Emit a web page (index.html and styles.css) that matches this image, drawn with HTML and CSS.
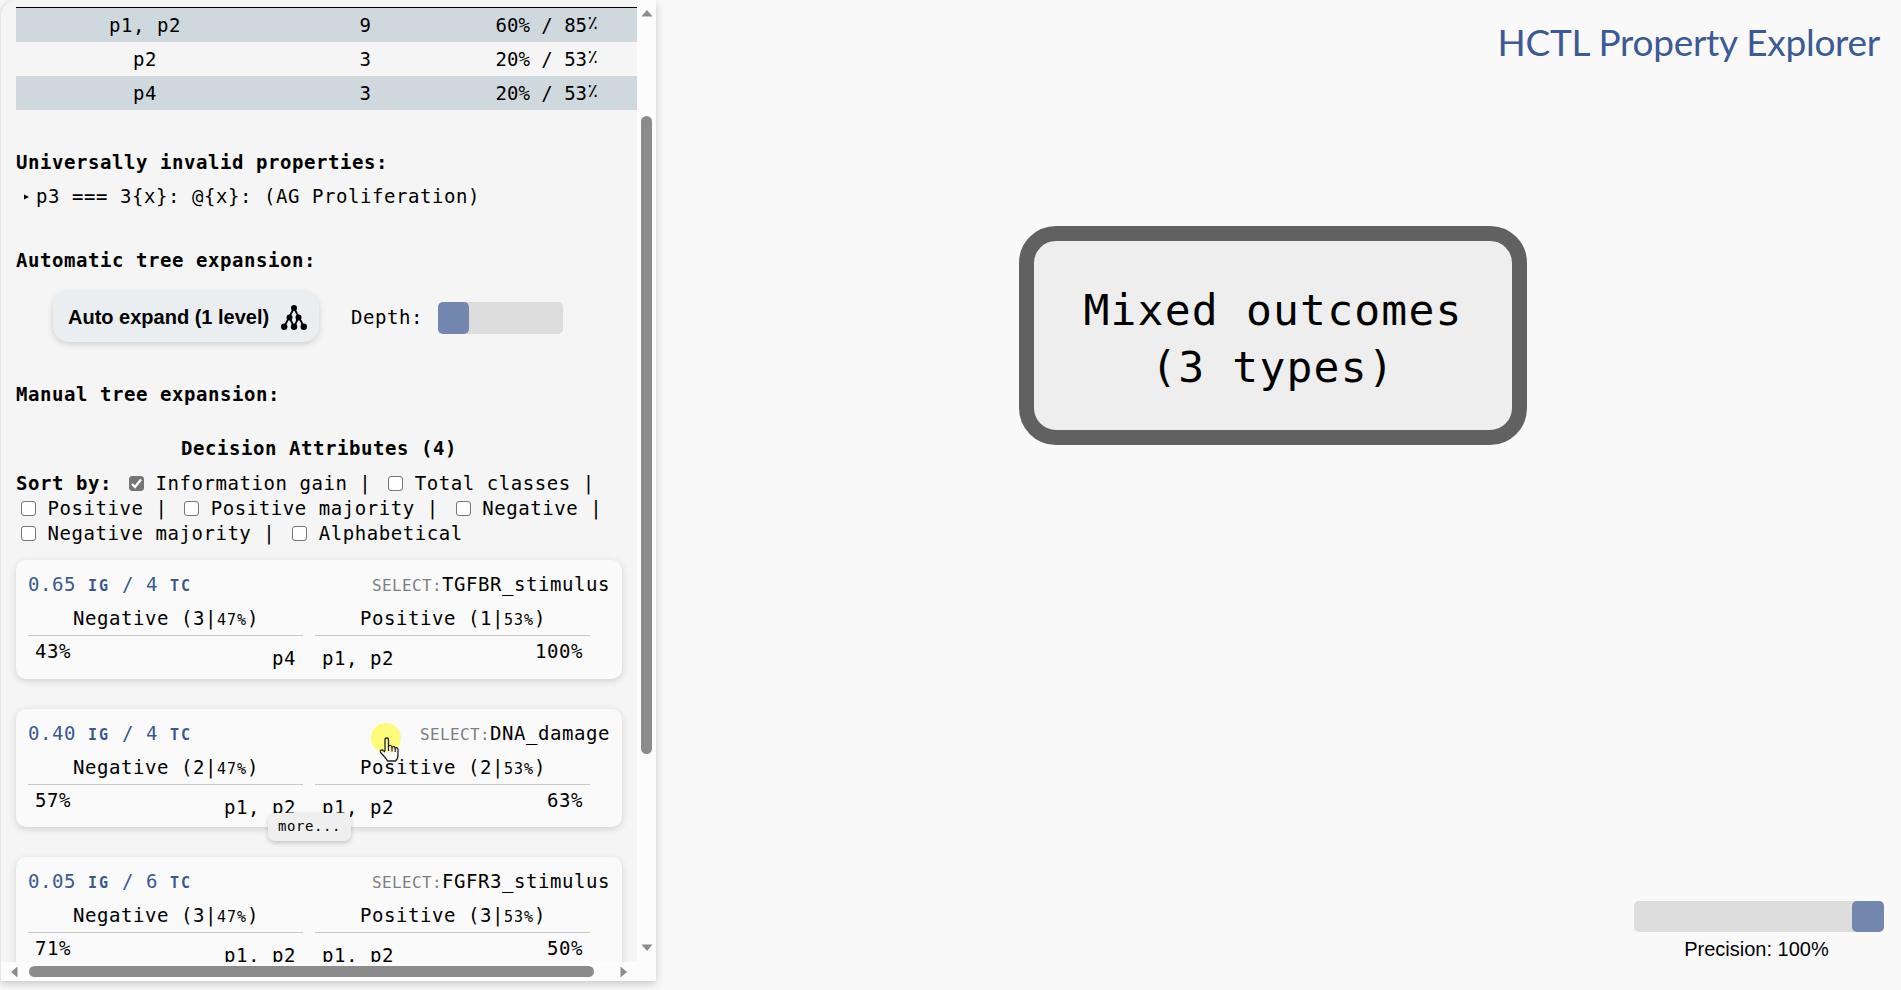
FILE: index.html
```html
<!DOCTYPE html>
<html lang="en">
<head>
<meta charset="utf-8">
<title>HCTL Property Explorer</title>
<link rel="stylesheet" href="styles.css">
</head>
<body>
<div class="app">
  <aside class="panel">
    <div class="view">
      <div class="content">
        <div class="table">
          <div class="row odd"><span>p1, p2</span><span>9</span><span>60% / 85<i>٪</i></span></div>
          <div class="row"><span>p2</span><span>3</span><span>20% / 53<i>٪</i></span></div>
          <div class="row odd"><span>p4</span><span>3</span><span>20% / 53<i>٪</i></span></div>
        </div>
        <h3 class="invalid-title">Universally invalid properties:</h3>
        <p class="prop"><svg width="6" height="8" viewBox="0 0 6 8"><path d="M0 1.5L5 4L0 6.5Z"/></svg>p3 === 3{x}: @{x}: (AG Proliferation)</p>
        <h3 class="auto-title">Automatic tree expansion:</h3>
        <div class="auto">
          <button class="expand"><span>Auto expand (1 level)</span><svg width="26" height="25" viewBox="0 0 26 25"><path d="M13 3L3 22M13 3L23 22M8.5 12.5L13 22M17.5 12.5L13 22" fill="none" stroke="#000" stroke-width="1.8"/><circle cx="13" cy="3" r="3"/><circle cx="8.5" cy="12.5" r="3"/><circle cx="17.5" cy="12.5" r="3"/><circle cx="3.2" cy="21.8" r="3.2"/><circle cx="13" cy="21.8" r="3.2"/><circle cx="22.8" cy="21.8" r="3.2"/></svg></button>
          <span class="depth">Depth:</span>
          <div class="slider small"><div class="knob"></div></div>
        </div>
        <h3 class="manual-title">Manual tree expansion:</h3>
        <h3 class="attr-title">Decision Attributes (4)</h3>
        <div class="sort">
          <div><b>Sort by:</b> <span class="box on"><svg width="15" height="15" viewBox="0 0 15 15"><path d="M3 8L6 11L12 3.5" fill="none" stroke="#fff" stroke-width="2.3"/></svg></span>Information gain | <span class="box"></span>Total classes |</div>
          <div><span class="box"></span>Positive | <span class="box"></span>Positive majority | <span class="box"></span>Negative |</div>
          <div><span class="box"></span>Negative majority | <span class="box"></span>Alphabetical</div>
        </div>
        <div class="cards">
          <div class="card">
            <div class="head"><span class="gain">0.65 <b>IG</b> / 4 <b>TC</b></span><span><small>SELECT:</small>TGFBR_stimulus</span></div>
            <div class="cols">
              <div class="col neg"><div class="label">Negative (3|<em>47%</em>)</div><div class="vals"><span>43%</span><span class="cls">p4</span></div></div>
              <div class="col"><div class="label">Positive (1|<em>53%</em>)</div><div class="vals"><span class="cls">p1, p2</span><span>100%</span></div></div>
            </div>
          </div>
          <div class="card">
            <div class="head"><span class="gain">0.40 <b>IG</b> / 4 <b>TC</b></span><span><small>SELECT:</small>DNA_damage</span></div>
            <div class="cols">
              <div class="col neg"><div class="label">Negative (2|<em>47%</em>)</div><div class="vals"><span>57%</span><span class="cls">p1, p2</span></div></div>
              <div class="col"><div class="label">Positive (2|<em>53%</em>)</div><div class="vals"><span class="cls">p1, p2</span><span>63%</span></div></div>
            </div>
            <div class="more">more...</div>
          </div>
          <div class="card">
            <div class="head"><span class="gain">0.05 <b>IG</b> / 6 <b>TC</b></span><span><small>SELECT:</small>FGFR3_stimulus</span></div>
            <div class="cols">
              <div class="col neg"><div class="label">Negative (3|<em>47%</em>)</div><div class="vals"><span>71%</span><span class="cls">p1, p2</span></div></div>
              <div class="col"><div class="label">Positive (3|<em>53%</em>)</div><div class="vals"><span class="cls">p1, p2</span><span>50%</span></div></div>
            </div>
          </div>
        </div>
      </div>
      <div class="vbar">
        <svg width="12" height="7" viewBox="0 0 12 7"><path d="M0.5 6.5L6 0L11.5 6.5Z" fill="#8b8b8b"/></svg>
        <div class="vthumb"></div>
        <svg width="12" height="7" viewBox="0 0 12 7"><path d="M0.5 0.5L6 7L11.5 0.5Z" fill="#8b8b8b"/></svg>
      </div>
    </div>
    <div class="hbar">
      <svg width="7" height="12" viewBox="0 0 7 12"><path d="M6.5 0.5L0 6L6.5 11.5Z" fill="#8b8b8b"/></svg>
      <div class="hthumb"></div>
      <svg width="7" height="12" viewBox="0 0 7 12"><path d="M0.5 0.5L7 6L0.5 11.5Z" fill="#8b8b8b"/></svg>
    </div>
  </aside>
  <main class="canvas">
    <h1>HCTL Property Explorer</h1>
    <div class="node"><div>Mixed outcomes</div><div>(3 types)</div></div>
    <div class="precision">
      <div class="slider"><div class="knob"></div></div>
      <div class="caption">Precision: 100%</div>
    </div>
  </main>
</div>
<div class="pointer">
  <svg width="36" height="44" viewBox="0 0 36 44"><circle cx="15" cy="15" r="15" fill="#fdfb7c"/><path d="M14 28V17Q14 15 15.8 15Q17.5 15 17.5 17V23Q20 21.5 21 24Q23.500 22.700 24.200 25Q27 24 27 27V32Q27 36 24.500 38H16.500Q15 35 9.500 29.500Q9 26.500 11.500 27L14 29" fill="#fff" fill-opacity=".4" stroke="#222" stroke-width="1.3"/><path d="M17.500 23V28M21 24V28.500M24.200 25V29" stroke="#222" stroke-width="1.200"/></svg>
</div>
</body>
</html>
```
FILE: styles.css
```css
* { box-sizing: border-box; }
body { margin: 0; background: #f9f9f9; color: #000; font: 19px/25px "DejaVu Sans Mono", monospace; letter-spacing: 0.56px; overflow: hidden; }
svg { display: block; flex: none; }
h1, h3, p { margin: 0; }
.app { display: flex; width: 1901px; height: 990px; }
.panel { width: 656px; height: 981px; flex: none; border-left: 1px solid #e6e6e6; background: #f5f5f5; border-radius: 16px 0 0 0; box-shadow: 0 3px 8px rgba(0,0,0,.2); }
.view { display: flex; height: 962px; }
.content { width: 636px; height: 962px; padding: 7px 0 0 15px; overflow: hidden; white-space: nowrap; flex: none; }
.table { border-top: 1px solid #000; width: 621px; }
.row { display: grid; grid-template-columns: 258px 183px 180px; height: 34px; line-height: 34px; text-align: center; }
.row i { font-size: 19px; font-style: normal; position: relative; top: -3px; line-height: 1; }
.odd { background: #cfd8dd; }
h3 { font-size: 19px; line-height: 25px; font-weight: bold; }
.invalid-title { margin-top: 40px; }
.prop { display: flex; align-items: center; gap: 6px; padding-left: 8px; margin-top: 9px; }
.auto-title { margin-top: 39px; }
.auto { display: flex; align-items: center; margin-top: 18px; height: 51px; padding-left: 37px; }
.expand { display: flex; align-items: center; justify-content: space-between; width: 266px; height: 51px; padding: 1px 12px 0 15px; border: 0; border-radius: 16px; background: #ebeef1; color: #000; font: bold 20px "Liberation Sans", Arial, sans-serif; letter-spacing: 0; box-shadow: 0 2px 6px rgba(0,0,0,.16); }
.depth { width: 87px; margin: 2px 0 0 32px; }
.slider { display: flex; justify-content: flex-end; width: 250px; height: 31px; border-radius: 5px; background: #ddd; }
.knob { width: 32px; height: 100%; border-radius: 5px; background: #7387ae; }
.slider.small { justify-content: flex-start; width: 125px; height: 32px; margin-top: 3px; }
.small .knob { width: 31px; }
.manual-title { margin-top: 40px; }
.attr-title { margin-top: 29px; width: 606px; text-align: center; }
.sort { margin-top: 10px; }
.sort div { height: 25px; }
.box { display: inline-block; width: 15px; height: 15px; margin: 0 11.4px 0 5px; border: 1px solid #767676; border-radius: 3px; background: #fff; vertical-align: -1px; }
.box.on { background: #757575; overflow: hidden; vertical-align: -1px; }
.on svg { margin: -1px; }
.cards { display: flex; flex-direction: column; gap: 30px; margin-top: 14px; width: 606px; }
.card { position: relative; height: 118.500px; padding: 12px 12px 0; border-radius: 10px; background: #fafafa; box-shadow: 0 2px 7px rgba(0,0,0,.15); }
.head { display: flex; justify-content: space-between; height: 25px; }
.gain { color: #3c5890; }
.gain b { font-size: 15px; letter-spacing: 2px; }
small { font-size: 16px; letter-spacing: .37px; color: #808080; }
.cols { display: flex; gap: 12px; padding-top: 8px; }
.col { width: 275px; }
.label { height: 31px; padding: 1px 0 0 1px; border-bottom: 1px solid #c8c8c8; text-align: center; }
em { font-style: normal; font-size: 15px; letter-spacing: .9px; }
.vals { display: flex; justify-content: space-between; padding: 3px 7px 0; }
.cls { padding-top: 7px; }
.more { position: absolute; left: 252px; top: 104px; width: 83px; height: 28px; border-radius: 7px; background: #efefef; font-size: 14px; line-height: 27px; text-align: center; box-shadow: 0 2px 5px rgba(0,0,0,.2); z-index: 1; }
.vbar { display: flex; flex-direction: column; align-items: center; justify-content: space-between; width: 19px; background: #fcfcfc; padding: 10px 0 11px; }
.vthumb { width: 11px; height: 638px; border-radius: 6px; background: #8b8b8b; margin-bottom: 91px; }
.hbar { display: flex; align-items: center; height: 19px; background: #fcfcfc; padding-left: 10px; }
.hthumb { width: 565px; height: 11px; margin: 0 26px 0 11px; border-radius: 6px; background: #8b8b8b; }
.canvas { display: flex; flex-direction: column; flex: 1; padding: 18px 17px 0 0; }
h1 { align-self: flex-end; margin-right: 4px; font: 37px/48px Lato, sans-serif; letter-spacing: -.27px; color: #3c5a96; white-space: nowrap; }
.node { width: 508px; height: 219px; margin: 160px 0 0 363px; padding-top: 41px; border: 15px solid #616161; border-radius: 37px; background: #eee; text-align: center; font-size: 43px; line-height: 56.500px; letter-spacing: 1.200px; }
.precision { align-self: flex-end; width: 250px; margin-top: 456px; text-align: center; font: 20px/35px "Liberation Sans", Arial, sans-serif; letter-spacing: 0; }
.caption { padding-right: 5px; }
.pointer { position: absolute; left: 371px; top: 723px; z-index: 2; }
```
